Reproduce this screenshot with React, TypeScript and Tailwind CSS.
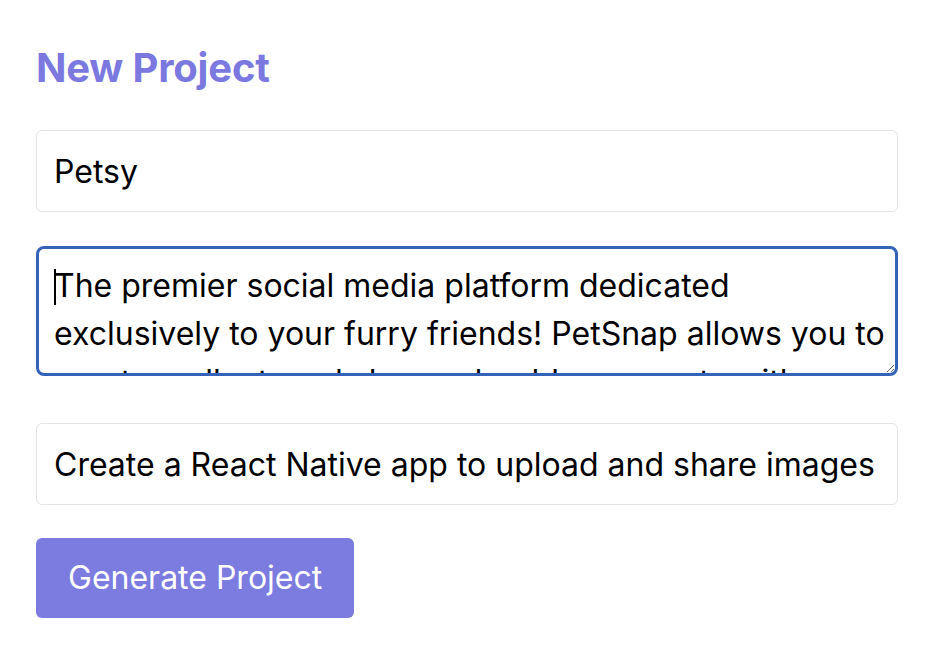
import { useState } from 'react'

export default function App() {
  const [name, setName] = useState('Petsy')
  const [description, setDescription] = useState(
    'The premier social media platform dedicated exclusively to your furry friends! PetSnap allows you to create, collect, and share adorable moments with a community of pet lovers around the world.'
  )
  const [prompt, setPrompt] = useState('Create a React Native app to upload and share images')

  return (
    <div className="min-h-screen bg-white px-[36px] pt-[44px] font-['Inter',sans-serif] text-black">
      <h1 className="text-[40px] leading-[48px] font-bold text-[#7b78df] tracking-[-0.2px]">New Project</h1>

      <div className="mt-[38px] flex w-[862px] flex-col">
        {/* project name */}
        <input
          value={name}
          onChange={(e) => setName(e.target.value)}
          className="h-[82px] rounded-[6px] border border-[#e4e4e4] px-[17px] text-[32px] outline-none"
        />

        {/* description — shown focused, caret at start */}
        <div className="relative mt-[34px] flex">
          <textarea
            value={description}
            onChange={(e) => setDescription(e.target.value)}
            className="h-[130px] w-full rounded-[8px] border-[3px] border-[#3563b9] pt-[13px] pr-[4px] pl-[15px] text-[32px] leading-[48px] outline-none"
          />
          <span className="pointer-events-none absolute top-[23px] left-[18px] h-[36px] w-[2px] bg-black" />
        </div>

        <input
          value={prompt}
          onChange={(e) => setPrompt(e.target.value)}
          className="mt-[47px] h-[82px] rounded-[6px] border border-[#e4e4e4] px-[17px] text-[32px] outline-none"
        />

        <div className="mt-[33px]">
          <button className="h-[80px] rounded-[6px] bg-[#7b7be0] px-[32px] text-[32px] text-white">
            Generate Project
          </button>
        </div>
      </div>
    </div>
  )
}
